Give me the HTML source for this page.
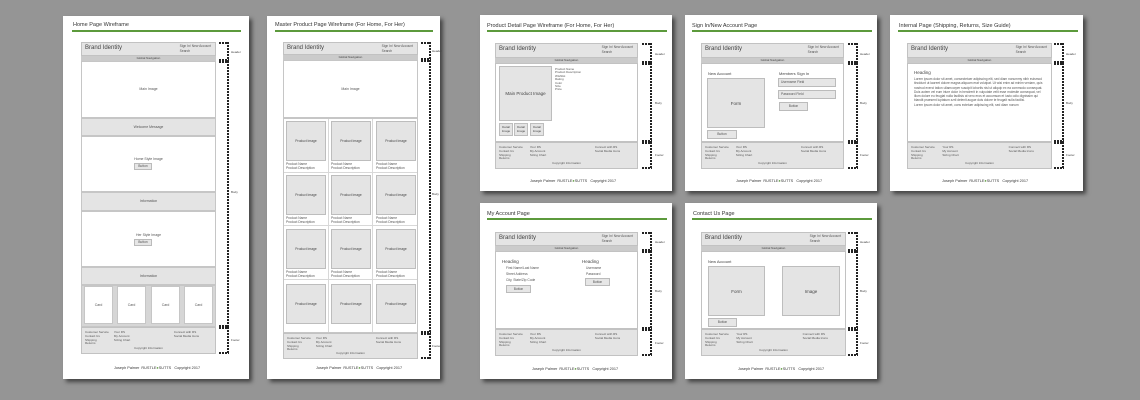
<!DOCTYPE html>
<html><head><meta charset="utf-8"><style>
*{margin:0;padding:0;box-sizing:border-box}
body{width:1140px;height:400px;background:#959595;position:relative;overflow:hidden;font-family:"Liberation Sans",sans-serif;color:#444}
.a{position:absolute}
.pg{position:absolute;background:#fff;box-shadow:3px 3px 4px rgba(0,0,0,.55)}
.tt{position:absolute;font-size:5.5px;color:#333;white-space:nowrap}
.gl{position:absolute;height:2px;background:#5c9a3c}
.hd{position:absolute;background:#e4e4e4;border:1px solid #c2c2c2}
.hd .bi{position:absolute;left:3px;top:2px;font-size:6px;color:#444}
.hd .si{position:absolute;right:4px;top:1px;font-size:3.3px;line-height:4.5px;color:#555}
.nv{position:absolute;background:#cbcbcb;font-size:3px;text-align:center;line-height:5px;color:#444}
.bd{position:absolute;background:#fff;border:1px solid #c2c2c2}
.sec{position:absolute;border:1px solid #c6c6c6;font-size:3.5px;text-align:center;color:#555}
.gr{background:#e4e4e4}
.ft{position:absolute;background:#e4e4e4;border:1px solid #c2c2c2;font-size:3px;line-height:3.8px;color:#555}
.ft .c1{position:absolute;left:3px;top:3px}
.ft .c2{position:absolute;left:24%;top:3px}
.ft .c3{position:absolute;right:12%;top:3px}
.ft .cp{position:absolute;left:0;right:0;bottom:2px;text-align:center}
.jp{position:absolute;font-size:3.8px;color:#333;white-space:nowrap}
.jp b{color:#5c9a3c;font-weight:normal}
.br{position:absolute;width:10px;background:
 repeating-linear-gradient(90deg,#222 0 2px,transparent 2px 3px) left top/100% 2px no-repeat,
 repeating-linear-gradient(90deg,#222 0 2px,transparent 2px 3px) left bottom/100% 2px no-repeat,
 repeating-linear-gradient(180deg,#222 0 2px,transparent 2px 3px) right top/2px 100% no-repeat}
.lb{position:absolute;font-size:3px;color:#444}
.sm{font-size:3.3px;color:#555}
.btn{position:absolute;background:#e6e6e6;border:1px solid #bbb;font-size:3.3px;text-align:center;color:#555}
.box{position:absolute;background:#e4e4e4;border:1px solid #bdbdbd;font-size:4.5px;color:#444;display:flex;align-items:center;justify-content:center}
</style></head><body>

<!-- PAGE 1 -->
<div class="pg" style="left:63px;top:16px;width:186px;height:363px"></div>
<div class="tt" style="left:73px;top:22px">Home Page Wireframe</div>
<div class="gl" style="left:72px;top:30px;width:169px"></div>
<div class="hd" style="left:81px;top:42px;width:135px;height:14px"><div class="bi">Brand Identity</div><div class="si">Sign In/ New Account<br>Search</div></div>
<div class="nv" style="left:81px;top:56px;width:135px;height:5px">Global Navigation</div>
<div class="sec" style="left:81px;top:61px;width:135px;height:57px;line-height:55px">Main Image</div>
<div class="sec gr" style="left:81px;top:118px;width:135px;height:18px;line-height:16px">Welcome Message</div>
<div class="sec" style="left:81px;top:136px;width:135px;height:56px;padding-top:20px">Home Style Image<div class="btn" style="left:52px;top:26px;width:18px;height:7px;line-height:5px">Button</div></div>
<div class="sec gr" style="left:81px;top:192px;width:135px;height:19px;line-height:17px">Information</div>
<div class="sec" style="left:81px;top:211px;width:135px;height:56px;padding-top:21px">Her Style Image<div class="btn" style="left:52px;top:27px;width:18px;height:7px;line-height:5px">Button</div></div>
<div class="sec gr" style="left:81px;top:267px;width:135px;height:18px;line-height:16px">Information</div>
<div class="sec" style="left:81px;top:285px;width:135px;height:42px;background:#d6d6d6"></div>
<div class="sec" style="left:84px;top:286px;width:29px;height:38px;background:#fff;line-height:36px">Card</div>
<div class="sec" style="left:117px;top:286px;width:29px;height:38px;background:#fff;line-height:36px">Card</div>
<div class="sec" style="left:151px;top:286px;width:29px;height:38px;background:#fff;line-height:36px">Card</div>
<div class="sec" style="left:184px;top:286px;width:29px;height:38px;background:#fff;line-height:36px">Card</div>
<div class="ft" style="left:81px;top:327px;width:135px;height:27px"><div class="c1">Customer Service<br>Contact Us<br>Shipping<br>Returns</div><div class="c2">Your RS<br>My Account<br>Sizing Chart</div><div class="c3">Connect with RS<br>Social Media Icons</div><div class="cp">Copyright Information</div></div>
<div class="br" style="left:219px;top:42px;height:19px"></div><div class="lb" style="left:231px;top:50px">Header</div>
<div class="br" style="left:219px;top:61px;height:266px"></div><div class="lb" style="left:231px;top:190px">Body</div>
<div class="br" style="left:219px;top:327px;height:27px"></div><div class="lb" style="left:231px;top:338px">Footer</div>
<div class="jp" style="left:114px;top:366px">Joseph Palmer &nbsp;RUSTLE<b>●</b>SUTTS &nbsp; Copyright 2017</div>

<!-- PAGE 2 -->
<div class="pg" style="left:267px;top:16px;width:173px;height:363px"></div>
<div class="tt" style="left:275px;top:22px">Master Product Page Wireframe (For Home, For Her)</div>
<div class="gl" style="left:275px;top:30px;width:158px"></div>
<div class="hd" style="left:283px;top:42px;width:135px;height:13px"><div class="bi">Brand Identity</div><div class="si">Sign In/ New Account<br>Search</div></div>
<div class="nv" style="left:283px;top:55px;width:135px;height:5px">Global Navigation</div>
<div class="sec" style="left:283px;top:60px;width:135px;height:58px;line-height:56px">Main Image</div>
<div class="sec" style="left:283px;top:118px;width:135px;height:215px;background:#d8d8d8"></div>
<div class="a" style="left:284px;top:119px;width:133px;height:213px;display:grid;grid-template-columns:repeat(3,1fr);grid-template-rows:repeat(4,1fr);gap:1px">
<div style="background:#fff"></div><div style="background:#fff"></div><div style="background:#fff"></div>
<div style="background:#fff"></div><div style="background:#fff"></div><div style="background:#fff"></div>
<div style="background:#fff"></div><div style="background:#fff"></div><div style="background:#fff"></div>
<div style="background:#fff"></div><div style="background:#fff"></div><div style="background:#fff"></div>
</div>
<div class="box" style="left:286px;top:121px;width:40px;height:40px;font-size:3.3px">Product Image</div>
<div class="box" style="left:331px;top:121px;width:40px;height:40px;font-size:3.3px">Product Image</div>
<div class="box" style="left:376px;top:121px;width:40px;height:40px;font-size:3.3px">Product Image</div>
<div class="box" style="left:286px;top:175px;width:40px;height:40px;font-size:3.3px">Product Image</div>
<div class="box" style="left:331px;top:175px;width:40px;height:40px;font-size:3.3px">Product Image</div>
<div class="box" style="left:376px;top:175px;width:40px;height:40px;font-size:3.3px">Product Image</div>
<div class="box" style="left:286px;top:229px;width:40px;height:40px;font-size:3.3px">Product Image</div>
<div class="box" style="left:331px;top:229px;width:40px;height:40px;font-size:3.3px">Product Image</div>
<div class="box" style="left:376px;top:229px;width:40px;height:40px;font-size:3.3px">Product Image</div>
<div class="box" style="left:286px;top:284px;width:40px;height:40px;font-size:3.3px">Product Image</div>
<div class="box" style="left:331px;top:284px;width:40px;height:40px;font-size:3.3px">Product Image</div>
<div class="box" style="left:376px;top:284px;width:40px;height:40px;font-size:3.3px">Product Image</div>
<div class="a sm" style="left:286px;top:163px;line-height:3.6px">Product Name<br>Product Description</div>
<div class="a sm" style="left:331px;top:163px;line-height:3.6px">Product Name<br>Product Description</div>
<div class="a sm" style="left:376px;top:163px;line-height:3.6px">Product Name<br>Product Description</div>
<div class="a sm" style="left:286px;top:217px;line-height:3.6px">Product Name<br>Product Description</div>
<div class="a sm" style="left:331px;top:217px;line-height:3.6px">Product Name<br>Product Description</div>
<div class="a sm" style="left:376px;top:217px;line-height:3.6px">Product Name<br>Product Description</div>
<div class="a sm" style="left:286px;top:271px;line-height:3.6px">Product Name<br>Product Description</div>
<div class="a sm" style="left:331px;top:271px;line-height:3.6px">Product Name<br>Product Description</div>
<div class="a sm" style="left:376px;top:271px;line-height:3.6px">Product Name<br>Product Description</div>
<div class="ft" style="left:283px;top:333px;width:135px;height:26px"><div class="c1">Customer Service<br>Contact Us<br>Shipping<br>Returns</div><div class="c2">Your RS<br>My Account<br>Sizing Chart</div><div class="c3">Connect with RS<br>Social Media Icons</div><div class="cp">Copyright Information</div></div>
<div class="br" style="left:421px;top:42px;height:18px"></div><div class="lb" style="left:432px;top:49px">Header</div>
<div class="br" style="left:421px;top:60px;height:273px"></div><div class="lb" style="left:432px;top:192px">Body</div>
<div class="br" style="left:421px;top:333px;height:26px"></div><div class="lb" style="left:432px;top:344px">Footer</div>
<div class="jp" style="left:316px;top:366px">Joseph Palmer &nbsp;RUSTLE<b>●</b>SUTTS &nbsp; Copyright 2017</div>

<!-- PAGE 3 Product detail -->
<div class="pg" style="left:480px;top:15px;width:192px;height:176px"></div>
<div class="tt" style="left:487px;top:23px">Product Detail Page Wireframe (For Home, For Her)</div>
<div class="gl" style="left:487px;top:30px;width:180px"></div>
<div class="hd" style="left:495px;top:43px;width:143px;height:15px"><div class="bi">Brand Identity</div><div class="si">Sign In/ New Account<br>Search</div></div>
<div class="nv" style="left:495px;top:58px;width:143px;height:5px">Global Navigation</div>
<div class="bd" style="left:495px;top:63px;width:143px;height:79px"></div>
<div class="box" style="left:499px;top:66px;width:53px;height:55px">Main Product Image</div>
<div class="box" style="left:499px;top:123px;width:14px;height:13px;font-size:3px;text-align:center;line-height:3.6px">Detail<br>Image</div>
<div class="box" style="left:514px;top:123px;width:14px;height:13px;font-size:3px;text-align:center;line-height:3.6px">Detail<br>Image</div>
<div class="box" style="left:530px;top:123px;width:14px;height:13px;font-size:3px;text-align:center;line-height:3.6px">Detail<br>Image</div>
<div class="a sm" style="left:555px;top:68px;font-size:3px;line-height:3.4px">Product Name<br>Product Description<br>Wishlist<br>Rating<br>Color<br>Size<br>Price</div>
<div class="ft" style="left:495px;top:142px;width:143px;height:27px"><div class="c1">Customer Service<br>Contact Us<br>Shipping<br>Returns</div><div class="c2">Your RS<br>My Account<br>Sizing Chart</div><div class="c3">Connect with RS<br>Social Media Icons</div><div class="cp">Copyright Information</div></div>
<div class="br" style="left:642px;top:43px;height:20px"></div><div class="lb" style="left:655px;top:52px">Header</div>
<div class="br" style="left:642px;top:63px;height:79px"></div><div class="lb" style="left:655px;top:101px">Body</div>
<div class="br" style="left:642px;top:142px;height:27px"></div><div class="lb" style="left:655px;top:153px">Footer</div>
<div class="jp" style="left:530px;top:179px">Joseph Palmer &nbsp;RUSTLE<b>●</b>SUTTS &nbsp; Copyright 2017</div>

<!-- PAGE 4 Sign in -->
<div class="pg" style="left:685px;top:15px;width:192px;height:176px"></div>
<div class="tt" style="left:692px;top:23px">Sign In/New Account Page</div>
<div class="gl" style="left:692px;top:30px;width:180px"></div>
<div class="hd" style="left:701px;top:43px;width:143px;height:15px"><div class="bi">Brand Identity</div><div class="si">Sign In/ New Account<br>Search</div></div>
<div class="nv" style="left:701px;top:58px;width:143px;height:5px">Global Navigation</div>
<div class="bd" style="left:701px;top:63px;width:143px;height:79px"></div>
<div class="a" style="left:708px;top:71px;font-size:4px">New Account</div>
<div class="box" style="left:707px;top:78px;width:58px;height:50px">Form</div>
<div class="btn" style="left:707px;top:130px;width:30px;height:9px;line-height:7px">Button</div>
<div class="a" style="left:779px;top:71px;font-size:4px">Members Sign In</div>
<div class="btn" style="left:778px;top:78px;width:58px;height:9px;line-height:7px;text-align:left;padding-left:2px">Username Field</div>
<div class="btn" style="left:778px;top:90px;width:58px;height:9px;line-height:7px;text-align:left;padding-left:2px">Password Field</div>
<div class="btn" style="left:779px;top:102px;width:29px;height:9px;line-height:7px">Button</div>
<div class="ft" style="left:701px;top:142px;width:143px;height:27px"><div class="c1">Customer Service<br>Contact Us<br>Shipping<br>Returns</div><div class="c2">Your RS<br>My Account<br>Sizing Chart</div><div class="c3">Connect with RS<br>Social Media Icons</div><div class="cp">Copyright Information</div></div>
<div class="br" style="left:848px;top:43px;height:20px"></div><div class="lb" style="left:860px;top:52px">Header</div>
<div class="br" style="left:848px;top:63px;height:79px"></div><div class="lb" style="left:860px;top:101px">Body</div>
<div class="br" style="left:848px;top:142px;height:27px"></div><div class="lb" style="left:860px;top:153px">Footer</div>
<div class="jp" style="left:736px;top:179px">Joseph Palmer &nbsp;RUSTLE<b>●</b>SUTTS &nbsp; Copyright 2017</div>

<!-- PAGE 5 Internal -->
<div class="pg" style="left:890px;top:15px;width:193px;height:176px"></div>
<div class="tt" style="left:899px;top:23px">Internal Page (Shipping, Returns, Size Guide)</div>
<div class="gl" style="left:898px;top:30px;width:180px"></div>
<div class="hd" style="left:907px;top:43px;width:145px;height:15px"><div class="bi">Brand Identity</div><div class="si">Sign In/ New Account<br>Search</div></div>
<div class="nv" style="left:907px;top:58px;width:145px;height:5px">Global Navigation</div>
<div class="bd" style="left:907px;top:63px;width:145px;height:79px"></div>
<div class="a" style="left:914px;top:70px;font-size:4.5px">Heading</div>
<div class="a sm" style="left:914px;top:77px;width:131px;font-size:3.2px;line-height:4.3px">Lorem ipsum dolor sit amet, consectetuer adipiscing elit, sed diam nonummy nibh euismod tincidunt ut laoreet dolore magna aliquam erat volutpat. Ut wisi enim ad minim veniam, quis nostrud exerci tation ullamcorper suscipit lobortis nisl ut aliquip ex ea commodo consequat. Duis autem vel eum iriure dolor in hendrerit in vulputate velit esse molestie consequat, vel illum dolore eu feugiat nulla facilisis at vero eros et accumsan et iusto odio dignissim qui blandit praesent luptatum zzril delenit augue duis dolore te feugait nulla facilisi.<br>Lorem ipsum dolor sit amet, cons ectetuer adipiscing elit, sed diam nonum</div>
<div class="ft" style="left:907px;top:142px;width:145px;height:27px"><div class="c1">Customer Service<br>Contact Us<br>Shipping<br>Returns</div><div class="c2">Your RS<br>My Account<br>Sizing Chart</div><div class="c3">Connect with RS<br>Social Media Icons</div><div class="cp">Copyright Information</div></div>
<div class="br" style="left:1054px;top:43px;height:20px"></div><div class="lb" style="left:1066px;top:52px">Header</div>
<div class="br" style="left:1054px;top:63px;height:79px"></div><div class="lb" style="left:1066px;top:101px">Body</div>
<div class="br" style="left:1054px;top:142px;height:27px"></div><div class="lb" style="left:1066px;top:153px">Footer</div>
<div class="jp" style="left:942px;top:179px">Joseph Palmer &nbsp;RUSTLE<b>●</b>SUTTS &nbsp; Copyright 2017</div>

<!-- PAGE 6 My Account -->
<div class="pg" style="left:480px;top:203px;width:192px;height:176px"></div>
<div class="tt" style="left:487px;top:211px">My Account Page</div>
<div class="gl" style="left:487px;top:218px;width:180px"></div>
<div class="hd" style="left:495px;top:232px;width:143px;height:14px"><div class="bi">Brand Identity</div><div class="si">Sign In/ New Account<br>Search</div></div>
<div class="nv" style="left:495px;top:246px;width:143px;height:5px">Global Navigation</div>
<div class="bd" style="left:495px;top:251px;width:143px;height:78px"></div>
<div class="a" style="left:502px;top:259px;font-size:4.5px">Heading</div>
<div class="a sm" style="left:506px;top:265px;font-size:3.3px;line-height:6px">First Name/Last Name<br>Street Address<br>City, State/Zip Code</div>
<div class="btn" style="left:506px;top:285px;width:25px;height:8px;line-height:6px">Button</div>
<div class="a" style="left:582px;top:259px;font-size:4.5px">Heading</div>
<div class="a sm" style="left:586px;top:265px;font-size:3.3px;line-height:6px">Username<br>Password</div>
<div class="btn" style="left:585px;top:278px;width:25px;height:8px;line-height:6px">Button</div>
<div class="ft" style="left:495px;top:329px;width:143px;height:27px"><div class="c1">Customer Service<br>Contact Us<br>Shipping<br>Returns</div><div class="c2">Your RS<br>My Account<br>Sizing Chart</div><div class="c3">Connect with RS<br>Social Media Icons</div><div class="cp">Copyright Information</div></div>
<div class="br" style="left:642px;top:232px;height:19px"></div><div class="lb" style="left:655px;top:240px">Header</div>
<div class="br" style="left:642px;top:251px;height:78px"></div><div class="lb" style="left:655px;top:289px">Body</div>
<div class="br" style="left:642px;top:329px;height:27px"></div><div class="lb" style="left:655px;top:341px">Footer</div>
<div class="jp" style="left:532px;top:367px">Joseph Palmer &nbsp;RUSTLE<b>●</b>SUTTS &nbsp; Copyright 2017</div>

<!-- PAGE 7 Contact -->
<div class="pg" style="left:685px;top:203px;width:192px;height:176px"></div>
<div class="tt" style="left:693px;top:211px">Contact Us Page</div>
<div class="gl" style="left:692px;top:218px;width:180px"></div>
<div class="hd" style="left:701px;top:232px;width:145px;height:14px"><div class="bi">Brand Identity</div><div class="si">Sign In/ New Account<br>Search</div></div>
<div class="nv" style="left:701px;top:246px;width:145px;height:5px">Global Navigation</div>
<div class="bd" style="left:701px;top:251px;width:145px;height:78px"></div>
<div class="a" style="left:708px;top:259px;font-size:4px">New Account</div>
<div class="box" style="left:708px;top:266px;width:57px;height:50px">Form</div>
<div class="box" style="left:782px;top:266px;width:58px;height:50px">Image</div>
<div class="btn" style="left:708px;top:318px;width:29px;height:9px;line-height:7px">Button</div>
<div class="ft" style="left:701px;top:329px;width:145px;height:27px"><div class="c1">Customer Service<br>Contact Us<br>Shipping<br>Returns</div><div class="c2">Your RS<br>My Account<br>Sizing Chart</div><div class="c3">Connect with RS<br>Social Media Icons</div><div class="cp">Copyright Information</div></div>
<div class="br" style="left:848px;top:232px;height:19px"></div><div class="lb" style="left:860px;top:240px">Header</div>
<div class="br" style="left:848px;top:251px;height:78px"></div><div class="lb" style="left:860px;top:289px">Body</div>
<div class="br" style="left:848px;top:329px;height:27px"></div><div class="lb" style="left:860px;top:341px">Footer</div>
<div class="jp" style="left:738px;top:367px">Joseph Palmer &nbsp;RUSTLE<b>●</b>SUTTS &nbsp; Copyright 2017</div>

</body></html>
